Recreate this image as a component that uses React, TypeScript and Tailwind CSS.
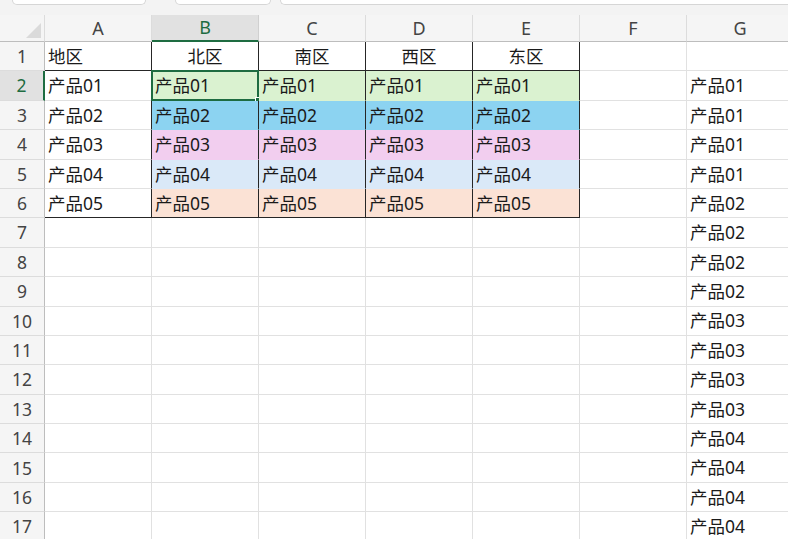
import React from 'react';

const COLS = ['A', 'B', 'C', 'D', 'E', 'F', 'G'];

const FILLS: Record<number, string> = {
  2: 'bg-[#daf2d0]',
  3: 'bg-[#8cd3f1]',
  4: 'bg-[#f2ceef]',
  5: 'bg-[#dae9f8]',
  6: 'bg-[#fbe2d5]',
};

const HEAD = ['地区', '北区', '南区', '西区', '东区'];

function gValue(r: number) {
  if (r < 2) return '';
  return `产品0${Math.floor((r - 2) / 4) + 1}`;
}

function cellText(r: number, c: number) {
  if (c === 6) return gValue(r);
  if (c > 4) return '';
  if (r === 1) return HEAD[c];
  if (r <= 6) return `产品0${r - 1}`;
  return '';
}

function Cell({ r, c }: { r: number; c: number }) {
  const inTable = r <= 6 && c <= 4;
  const filled = inTable && c >= 1 && r >= 2;
  const selected = r === 2 && c === 1;
  const text = cellText(r, c);

  const bg = filled ? FILLS[r] : 'bg-white';
  const right = inTable ? 'border-r-[#262626]' : 'border-r-[#e1e1e1]';
  let bottom = 'border-b-[#e1e1e1]';
  if (inTable && (r === 1 || r === 6)) bottom = 'border-b-[#262626]';
  else if (filled) bottom = 'border-b-transparent';

  const align = r === 1 && c >= 1 && c <= 4 ? 'justify-center' : 'justify-start';

  return (
    <div className={`relative h-[29.4px] flex items-center px-[3px] pt-px border-r border-b ${bg} ${right} ${bottom} ${align}`}>
      <span className="text-[17.5px] leading-none text-[#1a1a1a] whitespace-nowrap">{text}</span>
      {selected && (
        <div className="absolute -left-px -top-px -right-px -bottom-px border-2 border-[#1e6c41]">
          <div className="absolute -right-[4px] -bottom-[4px] w-[6px] h-[6px] bg-[#1e6c41] border border-white" />
        </div>
      )}
    </div>
  );
}

export default function App() {
  const rows = Array.from({ length: 17 }, (_, i) => i + 1);
  return (
    <div className="w-[788px] h-[539px] overflow-hidden bg-white font-['Noto_Sans','Noto_Sans_CJK_SC',sans-serif]">
      {/* toolbar strip */}
      <div className="h-[15px] bg-[#f3f3f3] flex items-start">
        <div className="ml-[12px] w-[134px] h-[5px] bg-white border border-t-0 border-[#d6d6d6] rounded-b-md" />
        <div className="ml-[29px] w-[96px] h-[5px] bg-white border border-t-0 border-[#d6d6d6] rounded-b-md" />
        <div className="ml-[9px] flex-1 h-[5px] bg-white border border-t-0 border-r-0 border-[#d6d6d6] rounded-bl-md" />
      </div>

      <div className="grid grid-cols-[45px_repeat(7,107px)]">
        {/* column header */}
        <div className="h-[27px] bg-[#f5f5f5] border-b border-b-[#bdbdbd] border-r border-r-[#dcdcdc] flex items-end justify-end p-[3px]">
          <div className="w-0 h-0 border-l-[15px] border-l-transparent border-b-[15px] border-b-[#dadada]" />
        </div>
        {COLS.map((l, i) => (
          <div
            key={l}
            className={
              i === 1
                ? 'h-[27px] bg-[#e1e1e1] border-b-2 border-b-[#1e6c41] border-r border-r-[#d0d0d0] flex items-center justify-center text-[18px] text-[#1e6c41]'
                : 'h-[27px] bg-[#f5f5f5] border-b border-b-[#bdbdbd] border-r border-r-[#dcdcdc] flex items-center justify-center text-[18px] text-[#444]'
            }
          >
            {l}
          </div>
        ))}

        {rows.map(r => (
          <React.Fragment key={r}>
            <div
              className={
                r === 2
                  ? 'h-[29.4px] bg-[#e1e1e1] border-r-2 border-r-[#1e6c41] border-b border-b-[#dcdcdc] flex items-center justify-center text-[17.5px] text-[#1e6c41]'
                  : 'h-[29.4px] bg-[#f5f5f5] border-r border-r-[#bdbdbd] border-b border-b-[#dcdcdc] flex items-center justify-center text-[17.5px] text-[#444]'
              }
            >
              {r}
            </div>
            {COLS.map((_, c) => (
              <Cell key={c} r={r} c={c} />
            ))}
          </React.Fragment>
        ))}
      </div>
    </div>
  );
}
